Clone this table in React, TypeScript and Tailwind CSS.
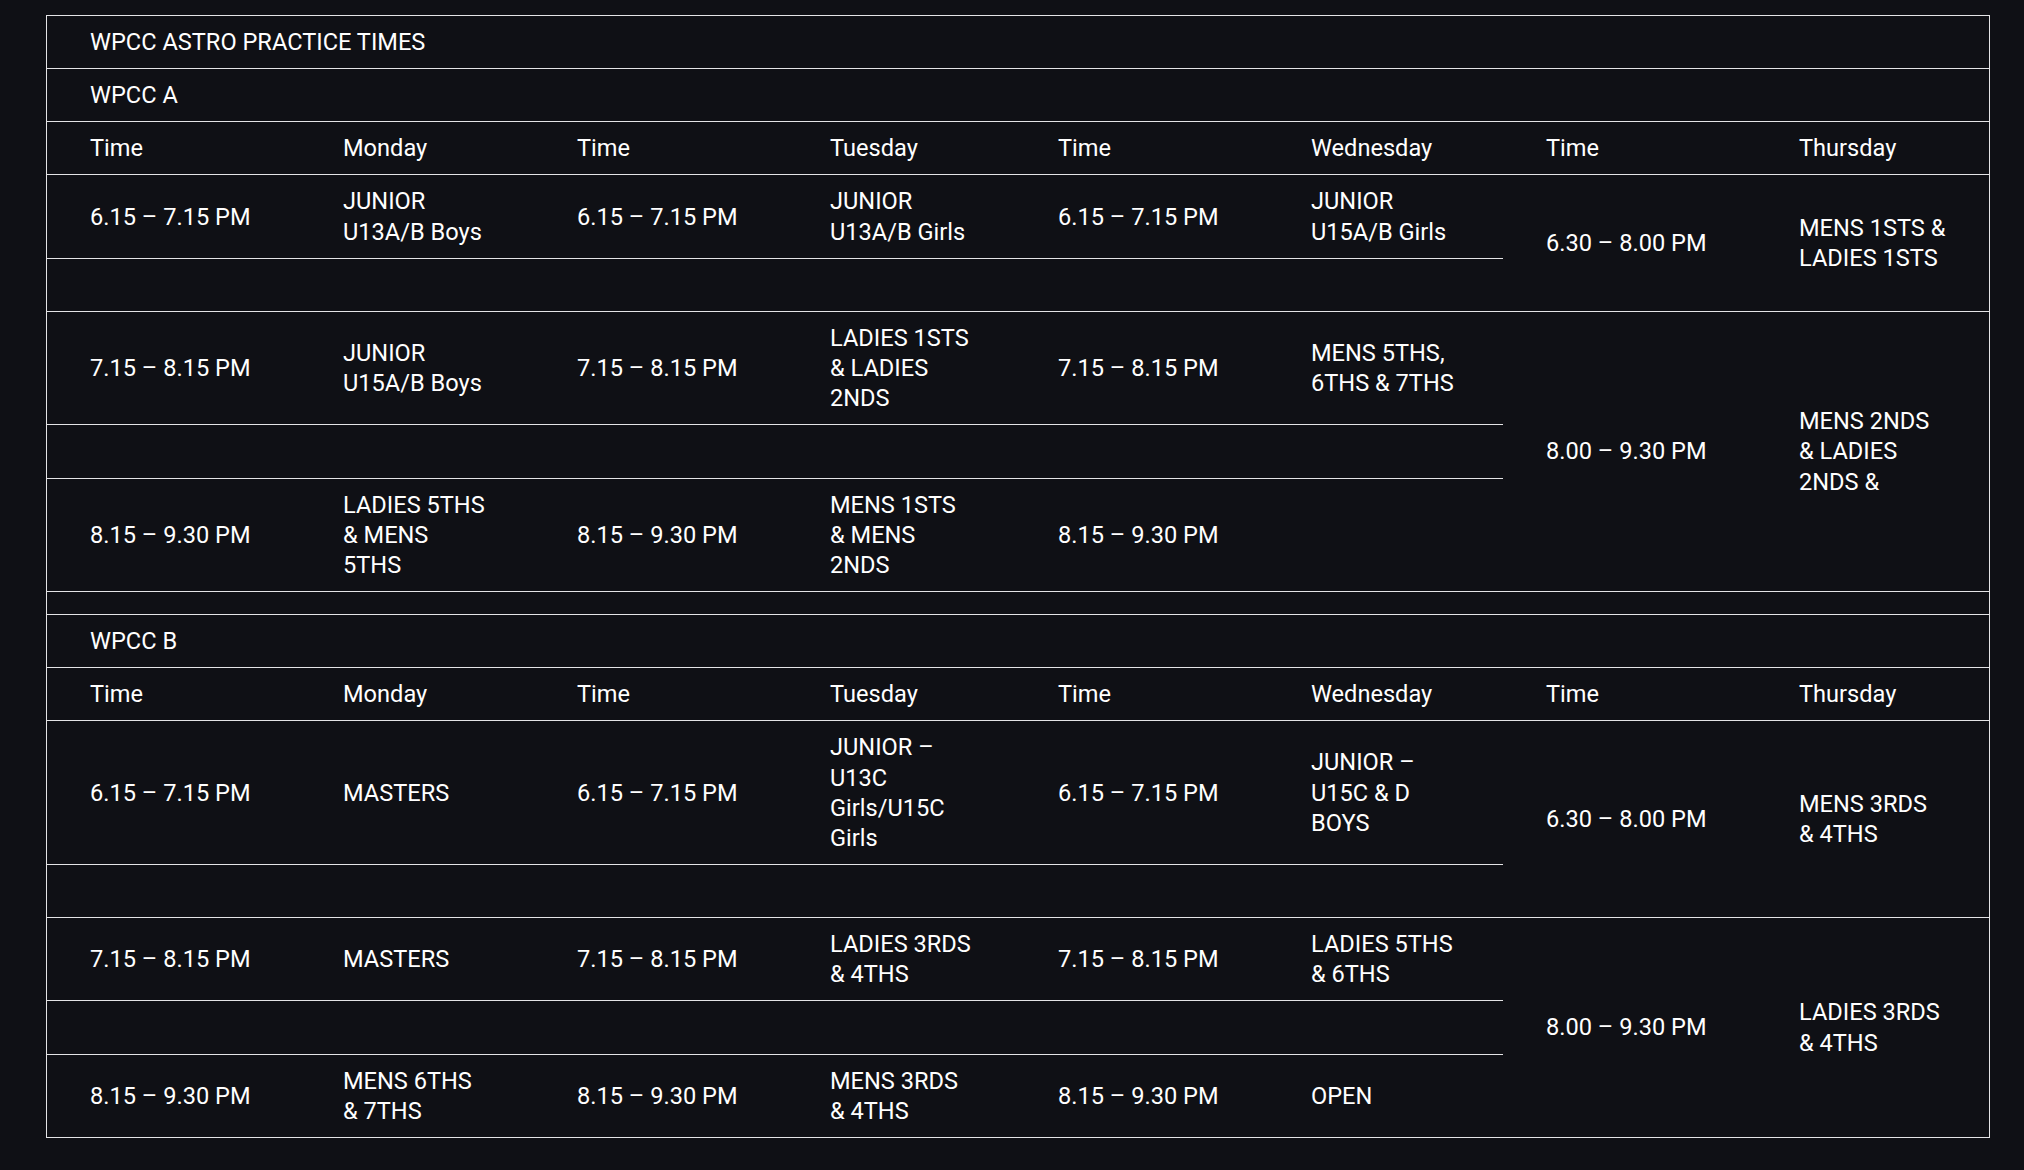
import React from "react";

type Cell = string[];
type Row = { cells: Cell[]; thu?: { span: number; time: Cell; label: Cell } };

const A: Row[] = [
  {
    cells: [["6.15 – 7.15 PM"], ["JUNIOR", "U13A/B Boys"], ["6.15 – 7.15 PM"], ["JUNIOR", "U13A/B Girls"], ["6.15 – 7.15 PM"], ["JUNIOR", "U15A/B Girls"]],
    thu: { span: 2, time: ["6.30 – 8.00 PM"], label: ["MENS 1STS &", "LADIES 1STS"] },
  },
  { cells: [[], [], [], [], [], []] },
  {
    cells: [["7.15 – 8.15 PM"], ["JUNIOR", "U15A/B Boys"], ["7.15 – 8.15 PM"], ["LADIES 1STS", "& LADIES", "2NDS"], ["7.15 – 8.15 PM"], ["MENS 5THS,", "6THS & 7THS"]],
    thu: { span: 3, time: ["8.00 – 9.30 PM"], label: ["MENS 2NDS", "& LADIES", "2NDS &"] },
  },
  { cells: [[], [], [], [], [], []] },
  {
    cells: [["8.15 – 9.30 PM"], ["LADIES 5THS", "& MENS", "5THS"], ["8.15 – 9.30 PM"], ["MENS 1STS", "& MENS", "2NDS"], ["8.15 – 9.30 PM"], []],
  },
];

const B: Row[] = [
  {
    cells: [["6.15 – 7.15 PM"], ["MASTERS"], ["6.15 – 7.15 PM"], ["JUNIOR –", "U13C", "Girls/U15C", "Girls"], ["6.15 – 7.15 PM"], ["JUNIOR –", "U15C & D", "BOYS"]],
    thu: { span: 2, time: ["6.30 – 8.00 PM"], label: ["MENS 3RDS", "& 4THS"] },
  },
  { cells: [[], [], [], [], [], []] },
  {
    cells: [["7.15 – 8.15 PM"], ["MASTERS"], ["7.15 – 8.15 PM"], ["LADIES 3RDS", "& 4THS"], ["7.15 – 8.15 PM"], ["LADIES 5THS", "& 6THS"]],
    thu: { span: 3, time: ["8.00 – 9.30 PM"], label: ["LADIES 3RDS", "& 4THS"] },
  },
  { cells: [[], [], [], [], [], []] },
  {
    cells: [["8.15 – 9.30 PM"], ["MENS 6THS", "& 7THS"], ["8.15 – 9.30 PM"], ["MENS 3RDS", "& 4THS"], ["8.15 – 9.30 PM"], ["OPEN"]],
  },
];

const HEAD = ["Time", "Monday", "Time", "Tuesday", "Time", "Wednesday", "Time", "Thursday"];

const td = "border-b border-[#e4e4e6] pl-[43px] pr-2 py-[11px] align-middle text-left font-normal whitespace-nowrap";

function Lines({ lines }: { lines: Cell }) {
  if (lines.length === 0) return <>{"\u00a0"}</>;
  return (
    <>
      {lines.map((l, i) => (
        <React.Fragment key={i}>
          {i > 0 && <br />}
          {l}
        </React.Fragment>
      ))}
    </>
  );
}

function Section({ name, rows }: { name: string; rows: Row[] }) {
  return (
    <>
      <tr>
        <td colSpan={8} className={td}>
          {name}
        </td>
      </tr>
      <tr>
        {HEAD.map((h, i) => (
          <td key={i} className={td}>
            {h}
          </td>
        ))}
      </tr>
      {rows.map((r, ri) => (
        <tr key={ri}>
          {r.cells.map((c, ci) => (
            <td key={ci} className={td}>
              <Lines lines={c} />
            </td>
          ))}
          {r.thu && (
            <>
              <td rowSpan={r.thu.span} className={td}>
                <Lines lines={r.thu.time} />
              </td>
              <td rowSpan={r.thu.span} className={td}>
                <Lines lines={r.thu.label} />
              </td>
            </>
          )}
        </tr>
      ))}
    </>
  );
}

export default function App() {
  return (
    <div className="min-h-screen bg-[#0f1015] pt-[15px] pl-[46px] font-[Roboto,sans-serif] text-[23.6px] leading-[30.16px] text-white">
      <table className="table-fixed border-separate border-spacing-0 w-[1944px] border-x border-t border-[#e4e4e6]">
        <colgroup>
          <col className="w-[253px]" />
          <col className="w-[234px]" />
          <col className="w-[253px]" />
          <col className="w-[228px]" />
          <col className="w-[253px]" />
          <col className="w-[235px]" />
          <col className="w-[253px]" />
          <col className="w-[233px]" />
        </colgroup>
        <tbody>
          <tr>
            <td colSpan={8} className={td}>
              WPCC ASTRO PRACTICE TIMES
            </td>
          </tr>
          <Section name="WPCC A" rows={A} />
          <tr>
            <td colSpan={8} className={td}></td>
          </tr>
          <Section name="WPCC B" rows={B} />
        </tbody>
      </table>
    </div>
  );
}
